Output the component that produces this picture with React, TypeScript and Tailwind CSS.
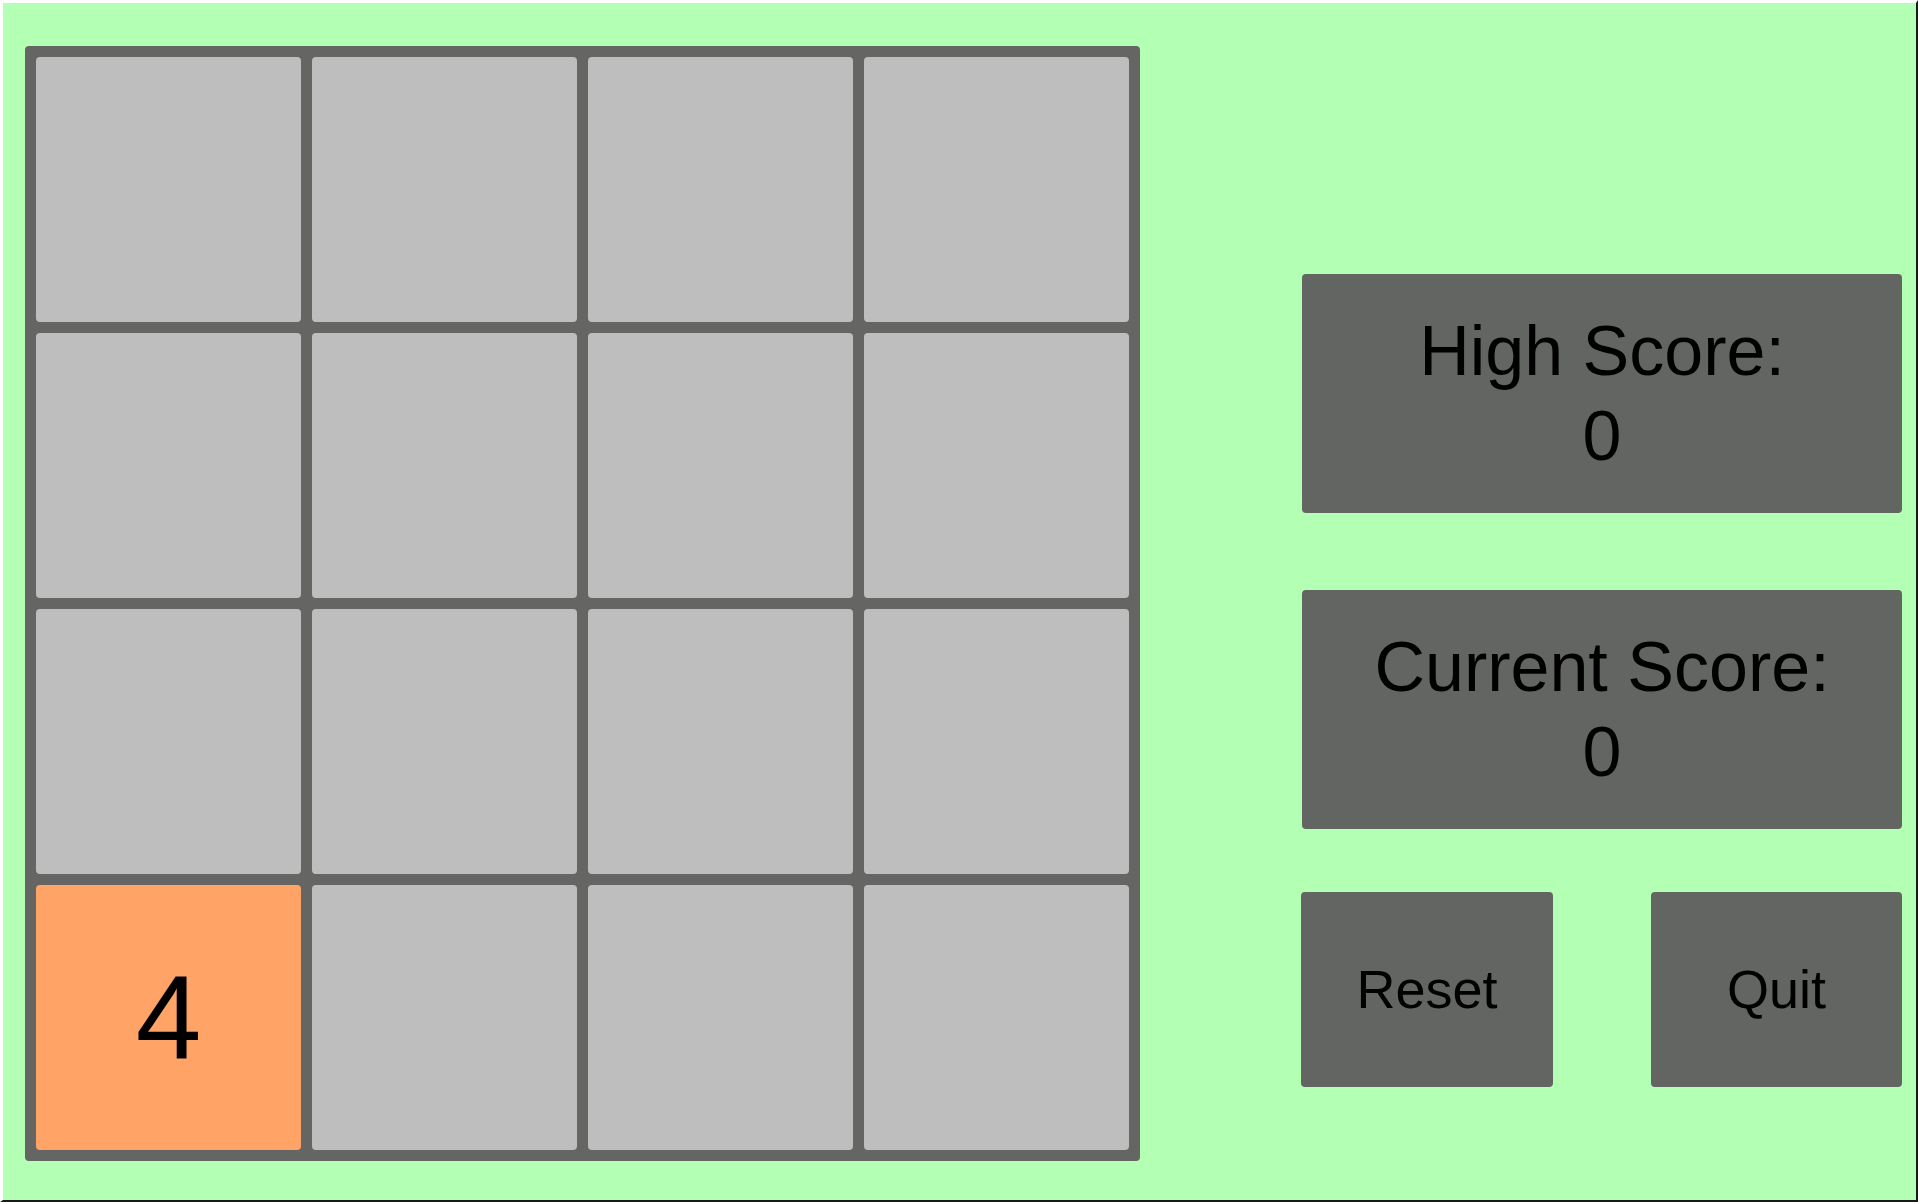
const board: number[][] = [
  [0, 0, 0, 0],
  [0, 0, 0, 0],
  [0, 0, 0, 0],
  [4, 0, 0, 0],
];

function Tile({ value }: { value: number }) {
  if (!value) {
    return <div className="w-[265px] h-[265px] rounded-[4px] bg-[#bebebe]" />;
  }
  return (
    <div className="w-[265px] h-[265px] rounded-[4px] bg-[#ffa366] flex items-center justify-center text-[118px] leading-none text-black">
      {value}
    </div>
  );
}

function ScorePanel({ label, score }: { label: string; score: number }) {
  return (
    <div className="w-[600px] h-[239px] rounded-[4px] bg-[#636562] flex flex-col items-center justify-center text-[70px] leading-[85px] text-black">
      <span>{label}</span>
      <span>{score}</span>
    </div>
  );
}

export default function App() {
  return (
    <div
      className="w-[1918px] h-[1202px] bg-[#b3ffb3] border-l-[3px] border-t-[3px] border-r-2 border-b-2 border-l-white border-t-white border-r-[#1a1a1a] border-b-[#1a1a1a] flex pl-[22px] pt-[43px]"
      style={{ fontFamily: '"Liberation Sans", Arial, sans-serif' }}
    >
      {/* Board */}
      <div className="w-[1115px] h-[1115px] bg-[#656664] rounded-[4px] p-[11px] grid grid-cols-4 gap-[11px] shrink-0">
        {board.flat().map((v, i) => (
          <Tile key={i} value={v} />
        ))}
      </div>

      {/* Side panel */}
      <div className="ml-[162px] w-[600px] flex flex-col pt-[228px]">
        <ScorePanel label="High Score:" score={0} />
        <div className="mt-[77px]">
          <ScorePanel label="Current Score:" score={0} />
        </div>
        <div className="mt-[63px] flex justify-between">
          <button className="w-[252px] h-[195px] -ml-px rounded-[4px] bg-[#636562] text-[54px] text-black">
            Reset
          </button>
          <button className="w-[251px] h-[195px] rounded-[4px] bg-[#636562] text-[54px] text-black">
            Quit
          </button>
        </div>
      </div>
    </div>
  );
}
